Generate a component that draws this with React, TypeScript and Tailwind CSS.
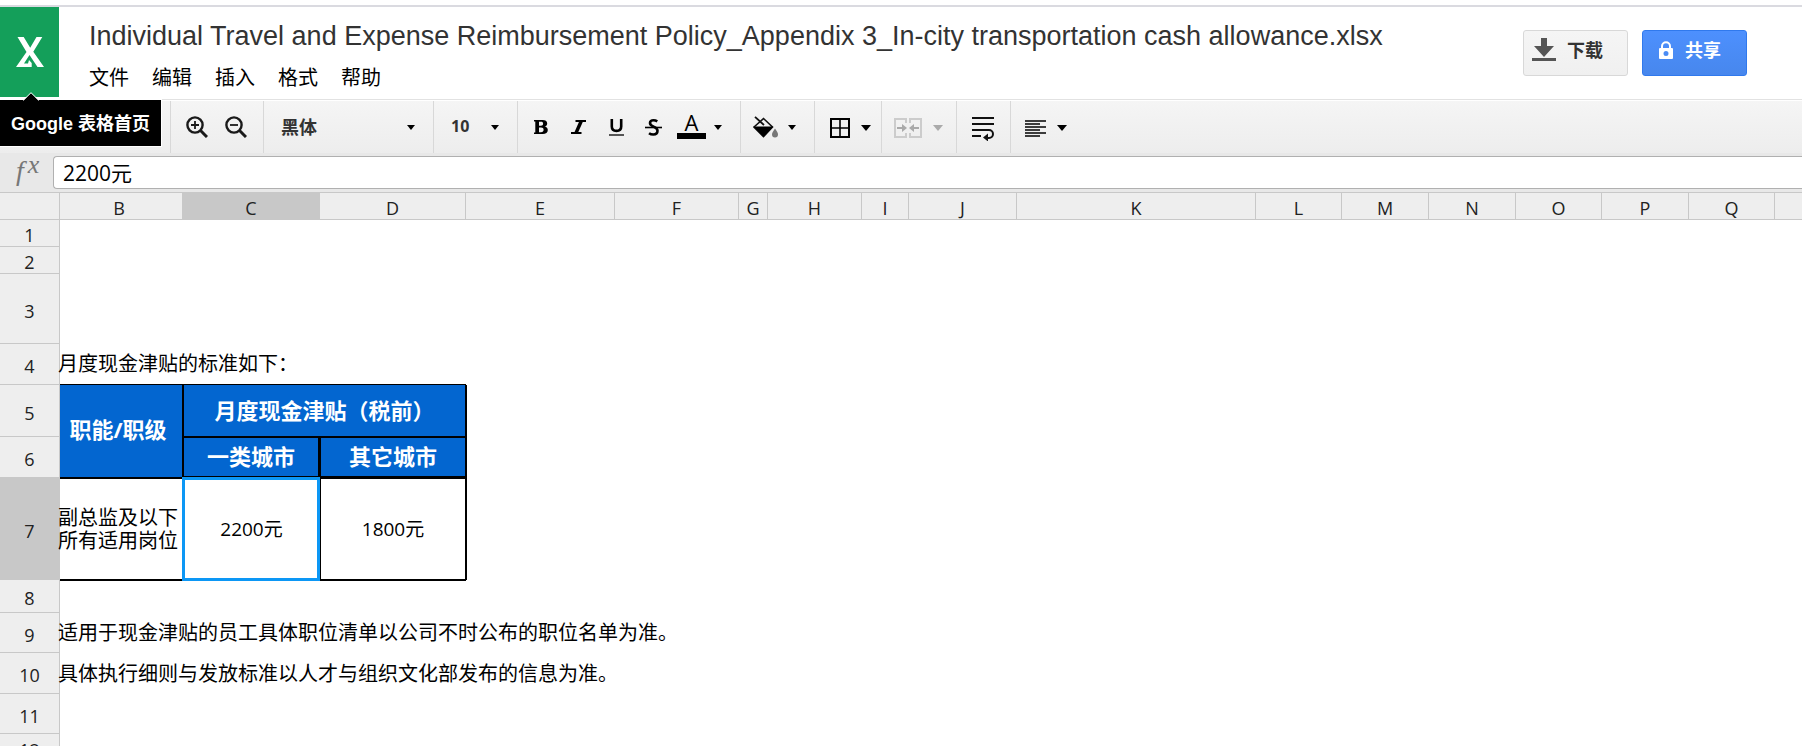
import React from "react";

const CJK = "font-['Open_Sans','Noto_Sans_CJK_SC',sans-serif]";

const columns: { name: string; width: string; selected?: boolean }[] = [
  { name: "B", width: "w-[123px] pr-1" },
  { name: "C", width: "w-[137px]", selected: true },
  { name: "D", width: "w-[146px]" },
  { name: "E", width: "w-[149px]" },
  { name: "F", width: "w-[124px]" },
  { name: "G", width: "w-[29px]" },
  { name: "H", width: "w-[94px]" },
  { name: "I", width: "w-[47px]" },
  { name: "J", width: "w-[108px]" },
  { name: "K", width: "w-[239px]" },
  { name: "L", width: "w-[86px]" },
  { name: "M", width: "w-[87px]" },
  { name: "N", width: "w-[87px]" },
  { name: "O", width: "w-[86px]" },
  { name: "P", width: "w-[87px]" },
  { name: "Q", width: "w-[86px]" },
];

function Caret({ large = false, className = "" }: { large?: boolean; className?: string }) {
  return (
    <svg
      viewBox="0 0 10 6"
      aria-hidden="true"
      className={`${large ? "h-[6px] w-[10px]" : "h-[5px] w-[8px]"} shrink-0 fill-current ${className}`}
    >
      <path d="M0 0h10L5 6z" />
    </svg>
  );
}

function Group({ className = "", children }: { className?: string; children?: React.ReactNode }) {
  return (
    <div className={`flex shrink-0 items-center border-l border-[#d8d8d8] ${className}`}>{children}</div>
  );
}

function IconButton({
  label,
  className = "",
  disabled,
  children,
}: {
  label: string;
  className?: string;
  disabled?: boolean;
  children: React.ReactNode;
}) {
  return (
    <button
      type="button"
      aria-label={label}
      disabled={disabled}
      className={`flex h-10 shrink-0 items-center ${className}`}
    >
      {children}
    </button>
  );
}

function ZoomIcon({ plus }: { plus?: boolean }) {
  return (
    <svg viewBox="0 0 22 22" className="h-[22px] w-[22px]" fill="none" stroke="#1a1a1a" aria-hidden="true">
      <circle cx="9" cy="9" r="7.6" strokeWidth="2.4" />
      <path d="M14.5 14.5L21 21" strokeWidth="3" />
      <path d={plus ? "M5 9h8M9 5v8" : "M5 9h8"} strokeWidth="1.8" />
    </svg>
  );
}

function Header() {
  return (
    <header className="flex border-t-2 border-[#dadae0] bg-white">
      <a
        href="#home"
        aria-label="Google 表格首页"
        className="relative flex h-[90px] w-[59px] shrink-0 items-center justify-center bg-[#149f5a]"
      >
        <svg viewBox="0 0 28 30" className="h-[30px] w-[28px]" aria-hidden="true">
          <path
            d="M1.500 0h6.200l6.500 10.700L20.500 0h5.800l-9 14.800L28 30h-6.500l-8-12L8 26.500h4L13 23l2.700 3V30H0l10.500-15z"
            fill="#fff"
          />
        </svg>
        <span className="absolute top-[93px] left-0 z-10 flex h-[46px] w-[161px] items-center justify-center whitespace-nowrap bg-black pt-0.5 text-lg leading-6 font-bold text-white outline outline-white font-['Liberation_Sans','Noto_Sans_CJK_SC',sans-serif]">
          Google 表格首页
        </span>
        <svg viewBox="0 0 16 9" className="absolute top-[85px] left-[23px] z-20 h-[9px] w-[16px]" aria-hidden="true">
          <path d="M0 9L8 1l8 8z" fill="#000" />
          <path d="M0 8.5L8 .7l8 7.800" fill="none" stroke="#fff" strokeWidth="1" />
        </svg>
      </a>
      <div className="flex min-w-0 flex-1 items-start justify-between pr-[55px] pl-[30px]">
        <div className="min-w-0 pt-3">
          <h1 className="truncate text-[27px] leading-[34px] text-[#333] font-['Liberation_Sans',sans-serif]">
            Individual Travel and Expense Reimbursement Policy_Appendix 3_In-city transportation cash
            allowance.xlsx
          </h1>
          <nav aria-label="菜单" className={`mt-[9px] flex gap-[23px] text-xl leading-8 text-black ${CJK}`}>
            {["文件", "编辑", "插入", "格式", "帮助"].map((item) => (
              <button key={item} type="button">
                {item}
              </button>
            ))}
          </nav>
        </div>
        <div className={`mt-[23px] flex shrink-0 gap-[14px] text-lg leading-6 font-bold ${CJK}`}>
          <button
            type="button"
            className="flex h-[46px] w-[105px] items-center gap-[11px] rounded-[3px] border border-[#d8d8d8] bg-linear-to-b from-[#f5f5f5] to-[#f0f0f0] pb-1.5 pl-2 text-[#333]"
          >
            <svg viewBox="0 0 24 24" className="h-6 w-6" fill="#555" aria-hidden="true">
              <path d="M9 0h6v8h7L12 19 2 8h7zM0 20h24v3H0z" />
            </svg>
            下载
          </button>
          <button
            type="button"
            className="flex h-[46px] w-[105px] items-center gap-3 rounded-[3px] border border-[#3079ed] bg-linear-to-b from-[#4d90fe] to-[#4787ed] pb-1.5 pl-4 text-white"
          >
            <svg viewBox="0 0 14 18" className="h-[18px] w-[14px]" aria-hidden="true">
              <path d="M3 8V5.200a4 4 0 0 1 8 0V8" fill="none" stroke="#fff" strokeWidth="2" />
              <path
                fillRule="evenodd"
                d="M1 7h12a1 1 0 0 1 1 1v9a1 1 0 0 1-1 1H1a1 1 0 0 1-1-1V8a1 1 0 0 1 1-1zm6 3a2.500 2.500 0 1 0 0 5 2.500 2.500 0 0 0 0-5z"
                fill="#fff"
              />
            </svg>
            共享
          </button>
        </div>
      </div>
    </header>
  );
}

function Toolbar() {
  return (
    <div
      role="toolbar"
      aria-label="工具栏"
      className="mt-0.5 border-t border-[#e2e2e2] bg-white pt-px"
    >
      <div className="flex h-[52px] bg-linear-to-b from-[#f5f5f5] to-[#ededed] pl-[170px] text-black">
        <Group className="w-[93px] gap-[17px] pl-[15px]">
          <IconButton label="放大">
            <ZoomIcon plus />
          </IconButton>
          <IconButton label="缩小">
            <ZoomIcon />
          </IconButton>
        </Group>
        <Group className="relative w-[170px]">
          <select
            aria-label="字体"
            defaultValue="黑体"
            className={`h-10 w-full appearance-none bg-transparent pl-[17px] text-lg font-bold text-[#333] ${CJK}`}
          >
            <option>黑体</option>
          </select>
          <Caret className="pointer-events-none absolute right-[18px]" />
        </Group>
        <Group className="relative w-[84px]">
          <select
            aria-label="字号"
            defaultValue="10"
            className={`h-10 w-full appearance-none bg-transparent pb-0.5 pl-[17px] text-base font-bold text-[#333] ${CJK}`}
          >
            <option>10</option>
          </select>
          <Caret className="pointer-events-none absolute right-[18px]" />
        </Group>
        <Group className="w-[223px] pl-1 text-lg leading-6">
          <IconButton label="粗体" className="w-[38px] justify-center">
            <svg viewBox="0 0 14 14" className="h-[14px] w-[14px]" aria-hidden="true">
              <path
                fillRule="evenodd"
                d="M0 0h8.500c3 0 4.700 1.200 4.700 3.400 0 1.600-.9 2.700-2.500 3.100 2 .3 3.100 1.600 3.100 3.500 0 2.600-1.900 4-5.100 4H0v-1.600h1.300V1.600H0zM5 1.800v3.900h1.900c1.500 0 2.200-.7 2.200-2s-.7-1.900-2.200-1.900zM5 7.500v4.700h2c1.700 0 2.600-.8 2.600-2.400 0-1.500-.9-2.300-2.600-2.300z"
              />
            </svg>
          </IconButton>
          <IconButton label="斜体" className="w-[37px] justify-center">
            <svg viewBox="0 0 15 14" className="h-[14px] w-[15px]" fill="none" stroke="#000" aria-hidden="true">
              <path d="M4.500 1H15M0 13h10.500" strokeWidth="2" />
              <path d="M10.300 1L5 13" strokeWidth="3.400" />
            </svg>
          </IconButton>
          <IconButton label="下划线" className="w-[38px] justify-center">
            <svg viewBox="0 0 15 18" className="h-[18px] w-[15px]" fill="none" stroke="#000" aria-hidden="true">
              <path d="M2.800 1v7.500c0 3 1.700 4.400 4.700 4.400s4.700-1.400 4.700-4.400V1" strokeWidth="2.600" />
              <path d="M0 17h15" strokeWidth="1.300" />
            </svg>
          </IconButton>
          <IconButton label="删除线" className="w-[36px] justify-center">
            <svg viewBox="0 0 17 17" className="h-[17px] w-[17px]" fill="none" stroke="#000" aria-hidden="true">
              <path
                d="M12.300 2.400C11 1.600 9.800 1.300 8.500 1.300c-2.300 0-3.500 1-3.500 2.700 0 4.400 7.500 2.800 7.500 7.800 0 2.300-1.500 3.700-4.200 3.700-1.600 0-3-.4-4.300-1.300"
                strokeWidth="2.600"
              />
              <path d="M0 8.500h17" strokeWidth="1.600" />
            </svg>
          </IconButton>
          <IconButton label="文字颜色" className="gap-2 pl-1.5">
            <span className="flex h-6 w-[29px] items-end justify-center border-b-6 border-black pb-px font-['Open_Sans',sans-serif] text-[22px] leading-[20px]">
              A
            </span>
            <Caret />
          </IconButton>
        </Group>
        <Group className="w-[74px] pl-3">
          <IconButton label="填充颜色" className="gap-[10px]">
            <svg viewBox="0 0 25 22" className="h-[22px] w-[25px]" aria-hidden="true">
              <path d="M1 11L10.500 2.500 19.500 11l-9 9.500z" fill="none" stroke="#111" strokeWidth="1.600" />
              <path d="M.5 10.500h19.500l-9.500 10.500z" fill="#000" />
              <path d="M2 .8L11 9" stroke="#111" strokeWidth="1.800" />
              <path d="M22 12.500c2 3 3 4.400 3 6a3 3 0 0 1-6 0c0-1.600 1-3 3-6z" fill="#777" />
            </svg>
            <Caret />
          </IconButton>
        </Group>
        <Group className="w-[67px] pt-0.5 pl-[15px]">
          <IconButton label="边框" className="gap-[11px]">
            <svg viewBox="0 0 20 20" className="h-5 w-5" fill="none" stroke="#000" aria-hidden="true">
              <path d="M1 1h18v18H1z" strokeWidth="2" />
              <path d="M10 1v18M1 10h18" strokeWidth="1.600" />
            </svg>
            <Caret large />
          </IconButton>
        </Group>
        <Group className="w-[75px] pt-0.5 pl-3">
          <IconButton label="合并单元格" disabled className="gap-[11px] text-[#aaa]">
            <svg viewBox="0 0 28 20" className="h-5 w-7" aria-hidden="true">
              <path
                d="M12 5V1H1v18h11v-4M16 5V1h11v18H16v-4"
                fill="none"
                stroke="#ccc"
                strokeWidth="2"
              />
              <path d="M3 9h5V6l5 4-5 4v-3H3zM25 9h-5V6l-5 4 5 4v-3h5z" fill="#aaa" />
            </svg>
            <Caret large />
          </IconButton>
        </Group>
        <Group className="w-[54px] pt-0.5 pl-[15px]">
          <IconButton label="自动换行">
            <svg viewBox="0 0 22 25" className="h-[25px] w-[22px]" fill="none" stroke="#111" strokeWidth="2" aria-hidden="true">
              <path d="M0 2h22M0 8h22M0 14h17a4 4 0 0 1 0 8h-2M0 20h9" />
              <path d="M11 21.500l5-4v8z" fill="#111" stroke="none" />
            </svg>
          </IconButton>
        </Group>
        <Group className="flex-1 pt-0.5 pl-[14px]">
          <IconButton label="对齐" className="gap-[11px]">
            <svg viewBox="0 0 21 17" className="h-[17px] w-[21px]" stroke="#000" strokeWidth="1.400" aria-hidden="true">
              <path d="M0 1h21M0 4h15M0 7h21M0 10h15M0 13h21M0 16h15" />
            </svg>
            <Caret large />
          </IconButton>
        </Group>
      </div>
    </div>
  );
}

function FormulaBar() {
  return (
    <div className="flex bg-[#e8e8e8] pt-[3px] pb-[3px]">
      <label
        htmlFor="formula"
        aria-label="fx"
        className="flex w-[53px] shrink-0 items-start gap-1 pl-4 font-['Liberation_Serif',serif] text-[#777] italic"
      >
        <span className="text-[28px] leading-[30px]">f</span>
        <span className="text-[26px] leading-[18px]">x</span>
      </label>
      <input
        id="formula"
        defaultValue="2200元"
        className={`h-[33px] min-w-0 flex-1 rounded-l-[4px] border border-r-0 border-[#b0b0b0] bg-white pb-0.5 pl-[9px] text-[21px] text-black ${CJK}`}
      />
    </div>
  );
}

function RowHeader({ n, selected }: { n: number; selected?: boolean }) {
  return (
    <th
      scope="row"
      className={`border-r border-b border-[#c8c8c8] p-0 pt-1 text-lg leading-5 font-normal text-[#222] ${
        selected ? "bg-[#c8c8c8]" : "bg-[#eee]"
      }`}
    >
      {n}
    </th>
  );
}

function TextRow({
  n,
  height,
  text,
  edge = "",
}: {
  n: number;
  height: string;
  text?: string;
  edge?: string;
}) {
  return (
    <tr className={height}>
      <RowHeader n={n} />
      <td colSpan={3} className={`p-0 text-xl leading-6 whitespace-nowrap ${edge}`}>
        {text && <div className="-ml-0.5">{text}</div>}
      </td>
      <td colSpan={14} className="p-0" />
    </tr>
  );
}

function Sheet() {
  const head = "border-black bg-[#0366d0] p-0 text-center text-[22px] leading-7 font-bold text-white";
  const body = "border-black p-0 text-center";
  return (
    <main className="min-h-0 flex-1 overflow-hidden bg-white">
      <table className={`w-full table-fixed border-separate border-spacing-0 text-black ${CJK}`}>
        <thead>
          <tr className="h-7">
            <th className="w-[60px] border-y border-r border-[#c8c8c8] bg-[#eee] p-0" />
            {columns.map((c) => (
              <th
                key={c.name}
                scope="col"
                className={`${c.width} border-y border-r border-[#c8c8c8] py-0 pt-1 text-lg leading-5 font-normal text-[#222] ${
                  c.selected ? "bg-[#c8c8c8]" : "bg-[#eee]"
                }`}
              >
                {c.name}
              </th>
            ))}
            <th className="border-y border-[#c8c8c8] bg-[#eee] p-0" />
          </tr>
        </thead>
        <tbody>
          <TextRow n={1} height="h-[27px]" />
          <TextRow n={2} height="h-[27px]" />
          <TextRow n={3} height="h-[70px]" />
          <TextRow n={4} height="h-[41px]" text="月度现金津贴的标准如下：" edge="border-b border-black" />
          <tr className="h-[52px]">
            <RowHeader n={5} />
            <td rowSpan={2} className={`${head} border-r border-b pr-1.5 pb-1`}>
              职能/职级
            </td>
            <td colSpan={2} className={`${head} border-r border-b border-l pb-0.5`}>
              月度现金津贴（税前）
            </td>
            <td colSpan={14} className="border-l border-black p-0" />
          </tr>
          <tr className="h-[41px]">
            <RowHeader n={6} />
            <td className={`${head} border-t border-r-2 border-b-2 border-l pb-0.5`}>一类城市</td>
            <td className={`${head} border-t border-r border-b-2 border-l pb-0.5`}>其它城市</td>
            <td colSpan={14} className="border-l border-black p-0" />
          </tr>
          <tr className="h-[102px]">
            <RowHeader n={7} selected />
            <td className={`${body} border-t border-r border-b text-left text-xl leading-[23px] whitespace-nowrap`}>
              <div className="-ml-0.5">
                副总监及以下
                <br />
                所有适用岗位
              </div>
            </td>
            <td className={`${body} relative text-[19px] leading-6`}>
              2200元
              <span className="pointer-events-none absolute -top-px right-0 -bottom-px -left-px border-3 border-[#0c97f5]" />
            </td>
            <td className={`${body} border-t border-r border-b border-l text-[19px] leading-6`}>1800元</td>
            <td colSpan={14} className="border-l border-black p-0" />
          </tr>
          <TextRow n={8} height="h-[33px]" edge="border-t border-black" />
          <TextRow
            n={9}
            height="h-[40px]"
            text="适用于现金津贴的员工具体职位清单以公司不时公布的职位名单为准。"
          />
          <TextRow
            n={10}
            height="h-[41px]"
            text="具体执行细则与发放标准以人才与组织文化部发布的信息为准。"
          />
          <TextRow n={11} height="h-[40px]" />
          <TextRow n={12} height="h-[29px]" />
        </tbody>
      </table>
    </main>
  );
}

export default function App() {
  return (
    <div className="flex h-screen flex-col overflow-hidden bg-white pt-[5px]">
      <Header />
      <Toolbar />
      <FormulaBar />
      <Sheet />
    </div>
  );
}
